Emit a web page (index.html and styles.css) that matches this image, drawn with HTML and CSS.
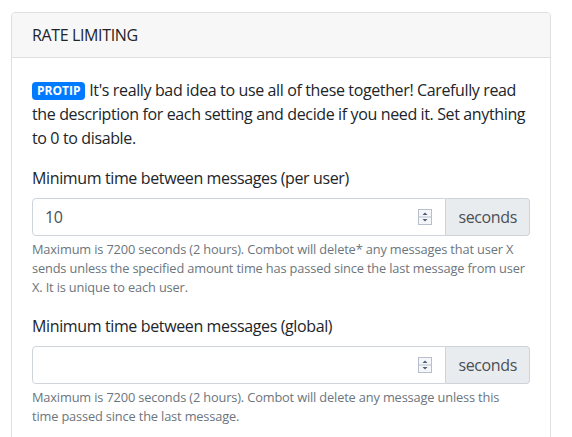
FILE: index.html
```
<!DOCTYPE html>
<html>
<head>
<meta charset="utf-8">
<link rel="stylesheet" href="styles.css">
</head>
<body>
<div class="card">
  <div class="card-header">RATE LIMITING</div>
  <div class="card-body">
    <p class="tip"><span class="badge">PROTIP</span> It's really bad idea to use all of these together! Carefully read the description for each setting and decide if you need it. Set anything to 0 to disable.</p>
    <div class="form-group">
      <label class="label">Minimum time between messages (per user)</label>
      <div class="input-group">
        <div class="field">
          <span class="value">10</span>
          <svg class="spin" width="14" height="16" viewBox="0 0 14 16"><rect x="0.5" y="0.5" width="13" height="15" fill="#f4f6f9" stroke="#b7bfcc"/><line x1="1" y1="8" x2="13" y2="8" stroke="#b7bfcc"/><path d="M4.5 6 L7 3.5 L9.5 6 Z" fill="#4e5d78"/><path d="M4.5 10 L7 12.5 L9.5 10 Z" fill="#4e5d78"/></svg>
        </div>
        <div class="addon">seconds</div>
      </div>
      <small class="help">Maximum is 7200 seconds (2 hours). Combot will delete* any messages that user X sends unless the specified amount time has passed since the last message from user X. It is unique to each user.</small>
    </div>
    <div class="form-group">
      <label class="label">Minimum time between messages (global)</label>
      <div class="input-group">
        <div class="field">
          <span class="value"></span>
          <svg class="spin" width="14" height="16" viewBox="0 0 14 16"><rect x="0.5" y="0.5" width="13" height="15" fill="#f4f6f9" stroke="#b7bfcc"/><line x1="1" y1="8" x2="13" y2="8" stroke="#b7bfcc"/><path d="M4.5 6 L7 3.5 L9.5 6 Z" fill="#4e5d78"/><path d="M4.5 10 L7 12.5 L9.5 10 Z" fill="#4e5d78"/></svg>
        </div>
        <div class="addon">seconds</div>
      </div>
      <small class="help">Maximum is 7200 seconds (2 hours). Combot will delete any message unless this<br>time passed since the last message.</small>
    </div>
  </div>
</div>
</body>
</html>
```
FILE: styles.css
```
html, body {
  margin: 0;
  padding: 0;
  background: #fff;
}
body {
  font-family: "Open Sans", "Noto Sans", sans-serif;
  font-size: 16px;
  line-height: 24px;
  color: #212529;
  letter-spacing: -0.37px;
}
.card {
  margin: 12px 21px 0 11px;
  border: 1px solid #dfdfdf;
  border-radius: 4px;
  overflow: hidden;
}
.card-header {
  background: #f7f7f7;
  border-bottom: 1px solid #dfdfdf;
  padding: 10px 20px;
}
.card-body {
  padding: 20px;
}
.tip {
  margin: 0 0 16px;
}
.badge {
  display: inline-block;
  background: #007bff;
  color: #fff;
  font-size: 12px;
  font-weight: 700;
  line-height: 12px;
  padding: 3px 5px;
  border-radius: 4px;
  letter-spacing: 0;
  vertical-align: 1px;
}
.form-group {
  margin-bottom: 16px;
}
.label {
  display: block;
  margin-bottom: 8px;
}
.input-group {
  display: flex;
  height: 38px;
}
.field {
  flex: 1;
  display: flex;
  align-items: center;
  border: 1px solid #ced4da;
  border-radius: 4px 0 0 4px;
  padding: 0 13px 0 12px;
  color: #495057;
}
.value {
  flex: 1;
}
.spin {
  display: block;
}
.addon {
  display: flex;
  align-items: center;
  padding: 0 12px;
  background: #e9ecef;
  border: 1px solid #ced4da;
  border-left: none;
  border-radius: 0 4px 4px 0;
  color: #495057;
}
.help {
  display: block;
  margin-top: 4px;
  font-size: 12.8px;
  line-height: 19.2px;
  color: #6c757d;
  letter-spacing: -0.15px;
}
```
